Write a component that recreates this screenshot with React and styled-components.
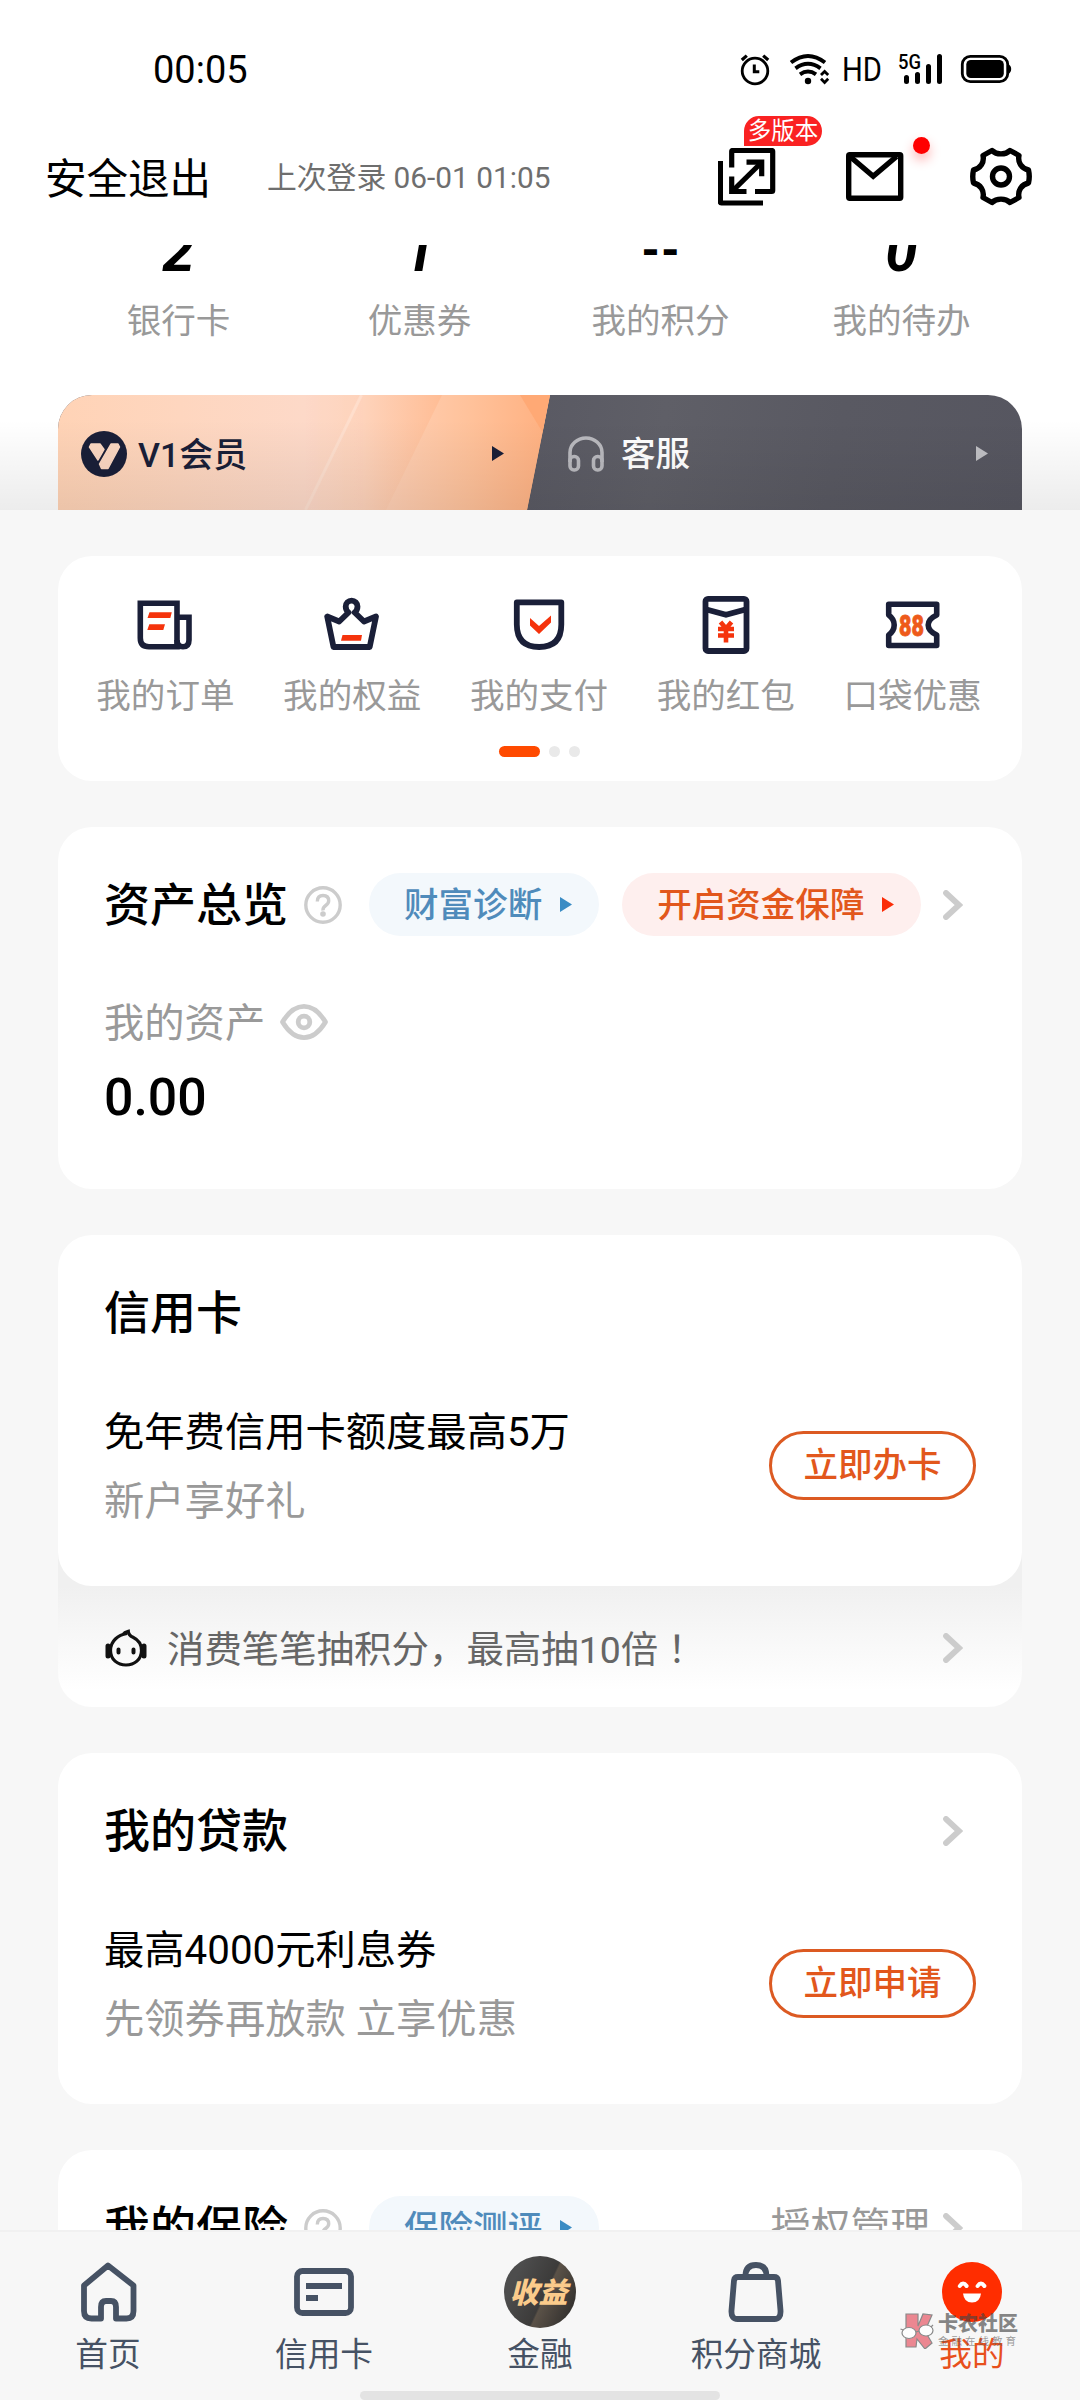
import React from 'react';
import styled, { createGlobalStyle } from 'styled-components';

const QUICK = [
  { label: '我的订单', icon: 'order' },
  { label: '我的权益', icon: 'crown' },
  { label: '我的支付', icon: 'shield' },
  { label: '我的红包', icon: 'packet' },
  { label: '口袋优惠', icon: 'coupon' },
];

const STATS = [
  { value: '2', label: '银行卡' },
  { value: '1', label: '优惠券' },
  { value: '--', label: '我的积分', small: true },
  { value: '0', label: '我的待办' },
];

const StatusIcons = () => (
  <svg width="272" height="38" viewBox="740 50 272 38" fill="none" stroke="#000">
    {/* alarm */}
    <circle cx="755" cy="71" r="12.8" strokeWidth="2.8" />
    <path d="M741.8 60l5-4.4M768.2 60l-5-4.4" strokeWidth="3.2" />
    <path d="M754.3 64.5v7.2h5" strokeWidth="3" />
    {/* wifi */}
    <path d="M791 62.5q17-13 34 0" strokeWidth="4" />
    <path d="M795.5 68.3q12.5-9 25 0" strokeWidth="4" />
    <path d="M800 74.3q8-5.6 16 0" strokeWidth="4" />
    <circle cx="808" cy="81" r="3.2" fill="#000" stroke="none" />
    <path d="M821 75l3.6-3.6 3.6 3.6M821 78.8l3.6 3.6 3.6-3.6" strokeWidth="2.8" />
    <text x="842" y="81" fontSize="34" fontFamily="Roboto, sans-serif" fill="#000" stroke="none" textLength="40" lengthAdjust="spacingAndGlyphs">HD</text>
    <text x="898" y="69" fontSize="20.5" fontFamily="Roboto, sans-serif" fontWeight="500" fill="#000" stroke="none" textLength="23" lengthAdjust="spacingAndGlyphs">5G</text>
    <g strokeWidth="5" strokeLinecap="round">
      <path d="M906.5 77.5v4M917.5 74.5v7M928.5 66.5v15M939.5 56.5v25" />
    </g>
    {/* battery */}
    <rect x="962.3" y="56.3" width="45.4" height="25.4" rx="8" strokeWidth="2.8" />
    <rect x="966.3" y="60" width="37.5" height="18" rx="4.5" fill="#000" stroke="none" />
    <path d="M1008 64q3.2 1.5 3.2 5t-3.2 5z" fill="#000" stroke="none" />
  </svg>
);

const ExpandIcon = () => (
  <svg width="58" height="58" viewBox="718 148 58 58" fill="none" stroke="#000" strokeWidth="5.2">
    <path d="M720.4 161v41q0 1 1 1H763" />
    <path d="M731.7 167.500v-16q0-1 1-1h39q1 0 1 1v39q0 1-1 1H755" />
    <path d="M746.5 162.2h15.2v14" />
    <path d="M731.7 176.500v15h14.8" />
    <path d="M733 190.5l28-27.5" />
  </svg>
);

const MailIcon = () => (
  <svg width="58" height="50" viewBox="846 152 58 50" fill="none" stroke="#000" strokeWidth="5.4">
    <rect x="848.7" y="154.700" width="52" height="43.600" rx="1" />
    <path d="M850 156.5l23.200 19.800 23.300-19.800" />
  </svg>
);

const GearIcon = () => (
  <svg width="62" height="60" viewBox="970.500 147 62 60" fill="none" stroke="#000" strokeWidth="5.400" strokeLinejoin="round">
    <path d="M992.5 150.5C997 155 1006 155 1010.5 150.5L1019.5 155.500C1018 162.5 1022 168.5 1029 170Q1030.5 176.5 1029 183C1022 184.5 1018 190.5 1019.5 197.5L1010.5 202.5C1006 198 997 198 992.5 202.5L983.5 197.5C985 190.5 981 184.5 974 183Q972.5 176.5 974 170C981 168.5 985 162.5 983.5 155.500Z" />
    <circle cx="1001.5" cy="176.5" r="8.5" />
  </svg>
);

const VipLogo = () => (
  <svg width="46" height="46" viewBox="0 0 46 46">
    <circle cx="23" cy="23" r="23" fill="#1a1f38" />
    <path d="M10 13h9l4 5.5-6 10.5-8.500-13z" fill="#fbd7c2" stroke="#fbd7c2" strokeWidth="1.5" strokeLinejoin="round" />
    <path d="M30 13h7l1.500 3-11.500 21.500h-6.500l-2-4.500z" fill="#fbd7c2" stroke="#fbd7c2" strokeWidth="1.5" strokeLinejoin="round" />
  </svg>
);

const Headphones = () => (
  <svg width="36" height="36" viewBox="0 0 36 36" fill="none" stroke="#b9b9be" strokeWidth="3.6">
    <path d="M2 26V16.500a16 14.500 0 0 1 32 0V26" />
    <rect x="2" y="20.500" width="8.500" height="13.500" rx="4" />
    <rect x="25.500" y="20.500" width="8.500" height="13.500" rx="4" />
  </svg>
);

/* light facets behind the member entry */
const Facets = () => (
  <FacetArt viewBox="0 0 492 115" preserveAspectRatio="none">
    <defs>
      <linearGradient id="fa" x1="0" x2="1" y1="0" y2="0">
        <stop offset="0" stopColor="#ffd3b6" />
        <stop offset="0.500" stopColor="#fdd9c8" />
        <stop offset="0.620" stopColor="#fed3bb" />
        <stop offset="0.780" stopColor="#ffbd95" />
        <stop offset="1" stopColor="#ffb27f" />
      </linearGradient>
      <linearGradient id="fb" x1="0" x2="1" y1="0" y2="0">
        <stop offset="0" stopColor="#ffd0b5" />
        <stop offset="0.500" stopColor="#ffc29b" />
        <stop offset="1" stopColor="#ffb080" />
      </linearGradient>
    </defs>
    <rect width="492" height="115" fill="url(#fa)" />
    <path d="M384 0H492V115H328z" fill="url(#fb)" />
    <path d="M462 0H492L485 38z" fill="#ffa975" />
    <path d="M303.5 0l-56 115" stroke="#ffe4d5" strokeWidth="3" opacity="0.6" />
  </FacetArt>
);

const Arrow = ({ color }) => (
  <svg width="12" height="15" viewBox="0 0 12 15">
    <path d="M0 0l12 7.5L0 15z" fill={color} />
  </svg>
);

const Chevron = () => (
  <svg width="20" height="30" viewBox="0 0 20 30" fill="none" stroke="#ccc" strokeWidth="5.800" strokeLinecap="round">
    <path d="M3 3l13 12L3 27" />
  </svg>
);

const HelpIcon = () => (
  <svg width="38" height="38" viewBox="0 0 38 38" fill="none" stroke="#ccc" strokeWidth="3.4">
    <circle cx="19" cy="19" r="17.200" />
    <path d="M13.300 15.500q0-6 5.700-6t5.700 5.300q0 2.700-3 4.700t-2.700 5" />
    <circle cx="19" cy="28" r="2.800" fill="#ccc" stroke="none" />
  </svg>
);

const EyeIcon = () => (
  <svg width="48" height="36" viewBox="0 0 48 36" fill="none" stroke="#ccc" strokeWidth="4.800">
    <path d="M2.500 18Q12 2.400 24 2.400T45.500 18Q36 33.600 24 33.600T2.500 18z" strokeLinejoin="round" />
    <circle cx="24" cy="18" r="5.800" />
  </svg>
);

const BabyIcon = () => (
  <svg width="42" height="38" viewBox="0 0 42 38" fill="none" stroke="#111" strokeWidth="3.2">
    <path d="M22 4.500C13 6 5.500 12 5.500 21.500c0 9 7 14.500 15.500 14.500s15.500-5.500 15.500-14.500c0-7-4-11-8.500-13.200-3-1.500-4.500-2.500-4.700-6-3 .7-4.500 1.800-6 3.800" />
    <path d="M3 17v10M39 17v10" strokeWidth="5" strokeLinecap="round" />
    <path d="M13.500 20.500v3M28.500 20.500v3" strokeWidth="4" strokeLinecap="round" />
  </svg>
);

const NAVY = '#1a1f38';
const RED = '#f5330c';

const QuickIcon = ({ name }) => {
  if (name === 'order') {
    return (
      <svg width="56" height="60" viewBox="138 595 56 60" fill="none" stroke={NAVY} strokeWidth="5.6">
        <path d="M141.300 603.300H178v43.400H150q-8.700 0-8.700-8.700z" />
        <path d="M178 617.300h12V640q0 6.700-6 6.700t-6-6.700" />
        <path d="M150.500 612.300h22.300l-1.500 5.800H148.500zM150.300 624.200h15.700l-1.700 5.800h-16z" fill={RED} stroke="none" />
      </svg>
    );
  }
  if (name === 'crown') {
    return (
      <svg width="56" height="60" viewBox="325 595 56 60" fill="none" stroke={NAVY} strokeWidth="5.800" strokeLinejoin="round">
        <path d="M349.500 612.500q-2.800-2.500-2.800-6a5.900 5.900 0 0 1 11.800 0q0 3.500-2.800 6l9.300 9 12-5-6.300 30.500H334.500l-6.300-30.500 12 5z" />
        <path d="M343.500 635h19.500l-1 5.800h-20z" fill={RED} stroke="none" />
      </svg>
    );
  }
  if (name === 'shield') {
    return (
      <svg width="56" height="60" viewBox="511.500 595 56 60" fill="none" stroke={NAVY} strokeWidth="5.800" strokeLinejoin="round">
        <path d="M517.300 602.400h44.500V624.500q0 22.500-22.200 22.500t-22.300-22.500z" />
        <path d="M530.500 618l9 8 12-10.500v7l-12 11.500-9-8.500z" fill={RED} stroke="none" />
      </svg>
    );
  }
  if (name === 'packet') {
    return (
      <svg width="56" height="60" viewBox="697.500 595 56 60" fill="none" stroke={NAVY} strokeWidth="5.8">
        <rect x="705" y="598.800" width="41" height="52.200" rx="2.500" />
        <path d="M706 609.500l19.500 5.300 19.500-5.300" />
        <path d="M720 622l5.500 6.500 5.500-6.500M717.500 629h16M717.500 635.500h16M725.500 628v14.500" stroke={RED} strokeWidth="4.6" />
      </svg>
    );
  }
  return (
    <svg width="56" height="60" viewBox="885 595 56 60" fill="none" stroke={NAVY} strokeWidth="5.6" strokeLinejoin="round">
      <path d="M888.700 604.300h48V615q-8.500 4-8.500 10t8.500 10v10.500h-48V635q5.500-4 5.500-10t-5.500-10z" />
      <text x="899" y="636" fontSize="30" fontWeight="900" fontFamily="Roboto, sans-serif" fill="#ee5a1a" stroke="#ee5a1a" strokeWidth="0.8" textLength="25" lengthAdjust="spacingAndGlyphs">88</text>
    </svg>
  );
};

const HomeIcon = () => (
  <svg width="60" height="60" viewBox="77.500 2262 60 60" fill="none" stroke="#465264" strokeWidth="5.800" strokeLinejoin="round">
    <path d="M107.500 2265.500L83.500 2285.500V2311q0 7.500 7.500 7.500H100.500V2307q0-6 5-6h5q5 0 5 6v11.500H126q7 0 7-7.500V2285.500z" />
  </svg>
);

const CardIcon = () => (
  <svg width="60" height="60" viewBox="294 2262 60 60" fill="none" stroke="#465264" strokeWidth="5.800">
    <rect x="297" y="2271" width="54" height="42" rx="5.500" />
    <path d="M306 2286h36M306 2298h12" />
  </svg>
);

const BagIcon = () => (
  <svg width="60" height="60" viewBox="726 2262 60 60" fill="none" stroke="#465264" strokeWidth="5.800" strokeLinejoin="round">
    <path d="M738 2277h36q3.500 0 4 3.500l2.500 30q.5 8.500-6 8.500h-37q-6.500 0-6-8.500l2.500-30q.5-3.500 4-3.500z" />
    <path d="M745.500 2276q0-11 10.500-11t10.500 11" />
  </svg>
);

const FaceIcon = () => (
  <svg width="60" height="60" viewBox="0 0 60 60" fill="none" stroke="#fff">
    <circle cx="30" cy="30" r="30" fill="#ff2d00" stroke="none" />
    <path d="M17.800 24q3.300-5 6.800 0M35.600 24q3.300-5 6.800 0" strokeWidth="4" strokeLinecap="round" />
    <path d="M21 31.500h18q-1 9-9 9t-9-9z" fill="#fff" stroke="none" />
  </svg>
);

const MarkLogo = () => (
  <svg width="35" height="36" viewBox="0 0 35 36" stroke="#777" strokeWidth="1.2">
    <path d="M6 1h12v12l5-12 9 1-7 16 7 12-7 6-8-10-1 8H6z" fill="#ea7480" />
    <ellipse cx="9" cy="20" rx="7" ry="5.500" fill="#fff" />
    <ellipse cx="26" cy="17.500" rx="7" ry="5.500" fill="#fff" />
    <path d="M.5 16l3 1M16 19l3-1M33 12l-2 2" />
  </svg>
);

const App = () => {
  return (
    <Screen>
      <GlobalStyle />
      <StatusBar>
        <Clock>00:05</Clock>
        <StatusIcons />
      </StatusBar>
      <TopBar>
        <Logout>安全退出</Logout>
        <LastLogin>上次登录 06-01 01:05</LastLogin>
        <Actions>
          <Action>
            <ExpandIcon />
            <Badge>多版本</Badge>
          </Action>
          <Action>
            <MailIcon />
            <Dot />
          </Action>
          <Action>
            <GearIcon />
          </Action>
        </Actions>
      </TopBar>

      <Content>
        <Hero>
          <Stats>
            {STATS.map((s) => (
              <Stat key={s.label}>
                <StatValue $small={s.small}>{s.value}</StatValue>
                <StatLabel>{s.label}</StatLabel>
              </Stat>
            ))}
          </Stats>
          <MemberBar>
            <Member>
              <Facets />
              <VipLogo />
              <MemberText>V1会员</MemberText>
              <Arrow color={NAVY} />
            </Member>
            <Service>
              <Headphones />
              <ServiceText>客服</ServiceText>
              <Arrow color="#c0c0c4" />
            </Service>
          </MemberBar>
        </Hero>

        <Cards>
          <QuickCard>
            <QuickRow>
              {QUICK.map((q) => (
                <Quick key={q.label}>
                  <QuickIcon name={q.icon} />
                  <QuickLabel>{q.label}</QuickLabel>
                </Quick>
              ))}
            </QuickRow>
            <Pager>
              <Page $active />
              <Page />
              <Page />
            </Pager>
          </QuickCard>

          <Card $height={362}>
            <TitleRow>
              <Title>资产总览</Title>
              <HelpIcon />
              <Pill>
                <PillText>财富诊断</PillText>
                <Arrow color="#3a8cc4" />
              </Pill>
              <Pill $warm>
                <PillText>开启资金保障</PillText>
                <Arrow color="#fb2c07" />
              </Pill>
              <More>
                <Chevron />
              </More>
            </TitleRow>
            <AssetLabel>
              <AssetName>我的资产</AssetName>
              <EyeIcon />
            </AssetLabel>
            <AssetValue>0.00</AssetValue>
          </Card>

          <Stack>
            <Card $height={351}>
              <TitleRow>
                <Title>信用卡</Title>
              </TitleRow>
              <Offer>
                <div>
                  <OfferMain>免年费信用卡额度最高5万</OfferMain>
                  <OfferSub>新户享好礼</OfferSub>
                </div>
                <ApplyBtn>立即办卡</ApplyBtn>
              </Offer>
            </Card>
            <Strip>
              <BabyIcon />
              <StripText>
                消费笔笔抽积分，最高抽10倍<Mark>！</Mark>
              </StripText>
              <More>
                <Chevron />
              </More>
            </Strip>
          </Stack>

          <Card $height={351}>
            <TitleRow>
              <Title>我的贷款</Title>
              <More>
                <Chevron />
              </More>
            </TitleRow>
            <Offer>
              <div>
                <OfferMain>最高4000元利息券</OfferMain>
                <OfferSub>先领券再放款 立享优惠</OfferSub>
              </div>
              <ApplyBtn>立即申请</ApplyBtn>
            </Offer>
          </Card>

          <Card $height={300}>
            <TitleRow>
              <Title>我的保险</Title>
              <HelpIcon />
              <Pill>
                <PillText>保险测评</PillText>
                <Arrow color="#3a8cc4" />
              </Pill>
              <More>
                授权管理
                <Chevron />
              </More>
            </TitleRow>
          </Card>
        </Cards>
      </Content>

      <TabBar>
        <Tab>
          <HomeIcon />
          <TabLabel>首页</TabLabel>
        </Tab>
        <Tab>
          <CardIcon />
          <TabLabel>信用卡</TabLabel>
        </Tab>
        <Tab>
          <Coin>收益</Coin>
          <TabLabel>金融</TabLabel>
        </Tab>
        <Tab>
          <BagIcon />
          <TabLabel>积分商城</TabLabel>
        </Tab>
        <Tab>
          <FaceIcon />
          <TabLabel $active>我的</TabLabel>
        </Tab>
        <HomeIndicator />
        <Watermark>
          <MarkLogo />
          <div>
            <WaterName>卡农社区</WaterName>
            <WaterSub>金融在线教育</WaterSub>
          </div>
        </Watermark>
      </TabBar>
    </Screen>
  );
};

const GlobalStyle = createGlobalStyle`
  body {
    margin: 0;
  }
  * {
    box-sizing: border-box;
  }
  svg {
    display: block;
    flex-shrink: 0;
  }
`;

const Screen = styled.div`
  display: flex;
  flex-direction: column;
  width: 1080px;
  height: 2400px;
  overflow: hidden;
  background: #f7f7f7;
  color: #000;
  font-family: Roboto, 'Noto Sans CJK SC', sans-serif;
  white-space: nowrap;
`;

const StatusBar = styled.div`
  display: flex;
  justify-content: space-between;
  align-items: center;
  height: 111px;
  padding: 27px 68px 0 153px;
  background: #fff;
`;

const Clock = styled.div`
  padding-top: 1px;
  font-size: 38px;
  line-height: 44px;
`;

const TopBar = styled.div`
  display: flex;
  align-items: center;
  height: 134px;
  padding: 0 48px 0 45px;
  background: #fff;
`;

const Logout = styled.div`
  width: 222px;
  padding-top: 3px;
  font-size: 41.5px;
  line-height: 60px;
`;

const LastLogin = styled.div`
  font-size: 29.8px;
  line-height: 44px;
  color: #6e6e6e;
`;

const Actions = styled.div`
  display: flex;
  align-items: center;
  gap: 67px;
  margin-top: -2px;
  margin-left: auto;
`;

const Action = styled.div`
  position: relative;
  & + & {
    margin-left: 3px;
  }
  & + & + & {
    margin-left: -1px;
  }
`;

const Badge = styled.div`
  position: absolute;
  left: 24px;
  top: -34px;
  width: 82px;
  height: 34px;
  border: 2px solid #fff;
  border-radius: 17px 17px 17px 0;
  background: #fa2222;
  color: #fff;
  font-size: 23.5px;
  line-height: 31px;
  text-align: center;
`;

const Dot = styled.div`
  position: absolute;
  left: 67px;
  top: -15px;
  width: 17px;
  height: 17px;
  border-radius: 50%;
  background: #ff0000;
  box-shadow: 0 6px 12px rgba(255, 0, 0, 0.3);
`;

const Content = styled.div`
  flex: 1;
  min-height: 0;
  overflow: hidden;
`;

const Hero = styled.div`
  position: relative;
  height: 265px;
  padding: 0 58px;
  background: #fff;
  &::after {
    content: '';
    position: absolute;
    left: 0;
    right: 0;
    bottom: 0;
    height: 90px;
    background: linear-gradient(rgba(0, 0, 0, 0), rgba(0, 0, 0, 0.075));
  }
`;

const Stats = styled.div`
  display: grid;
  grid-template-columns: repeat(4, 1fr);
  height: 150px;
`;

const Stat = styled.div`
  text-align: center;
`;

const StatValue = styled.div`
  height: 60px;
  margin-top: -23px;
  font-size: ${(p) => (p.$small ? '44px' : '58px')};
  font-weight: ${(p) => (p.$small ? 900 : 700)};
  font-style: ${(p) => (p.$small ? 'normal' : 'italic')};
  line-height: 58px;
`;

const StatLabel = styled.div`
  margin-top: 13px;
  font-size: 34.56px;
  line-height: 52px;
  color: #999;
`;

const MemberBar = styled.div`
  display: flex;
  height: 115px;
  border-radius: 34px 34px 0 0;
  overflow: hidden;
  background: linear-gradient(100deg, #585862 45%, #5f5f67 62%, #595962 80%, #565660);
`;

const Member = styled.div`
  position: relative;
  display: flex;
  align-items: center;
  width: 492px;
  padding: 2px 46px 0 23px;
  clip-path: polygon(0 0, 100% 0, 469px 100%, 0 100%);
  & > svg:last-child {
    position: relative;
  }
  & > svg:nth-child(2) {
    position: relative;
  }
`;

const FacetArt = styled.svg`
  position: absolute;
  left: 0;
  top: 0;
  width: 100%;
  height: 100%;
`;

const MemberText = styled.div`
  position: relative;
  flex: 1;
  margin-left: 11px;
  padding-top: 2px;
  font-size: 34px;
  font-weight: 500;
  line-height: 50px;
  color: #1a1f38;
`;

const Service = styled.div`
  display: flex;
  flex: 1;
  align-items: center;
  padding: 2px 34px 0 18px;
`;

const ServiceText = styled.div`
  flex: 1;
  margin-left: 17px;
  padding-top: 1px;
  font-size: 34.56px;
  font-weight: 500;
  line-height: 50px;
  color: #fff;
`;

const Cards = styled.div`
  display: flex;
  flex-direction: column;
  gap: 46px;
  padding: 46px 58px 0;
`;

const Card = styled.div`
  position: relative;
  z-index: 1;
  flex-shrink: 0;
  height: ${(p) => p.$height}px;
  padding: 46px 46px 0;
  border-radius: 34px;
  background: #fff;
`;

const QuickCard = styled.div`
  height: 225px;
  padding: 39px 16px 0 14px;
  border-radius: 34px;
  background: #fff;
`;

const QuickRow = styled.div`
  display: grid;
  grid-template-columns: repeat(5, 1fr);
`;

const Quick = styled.div`
  display: flex;
  flex-direction: column;
  align-items: center;
`;

const QuickLabel = styled.div`
  margin-top: 15px;
  font-size: 34.56px;
  line-height: 52px;
  color: #999;
`;

const Pager = styled.div`
  display: flex;
  justify-content: center;
  gap: 9px;
  margin-top: 24px;
`;

const Page = styled.div`
  width: ${(p) => (p.$active ? '41px' : '11px')};
  height: 11px;
  border-radius: 6px;
  background: ${(p) => (p.$active ? '#ff4a00' : '#e9e9e9')};
`;

const TitleRow = styled.div`
  display: flex;
  align-items: center;
  height: 63px;
`;

const Title = styled.div`
  margin-right: 16px;
  padding-top: 2px;
  font-size: 46px;
  font-weight: 500;
  line-height: 61px;
`;

const Pill = styled.div`
  display: flex;
  align-items: center;
  gap: 18px;
  height: 63px;
  margin-left: ${(p) => (p.$warm ? '23px' : '27px')};
  padding: 0 27px 0 35px;
  border-radius: 32px;
  background: ${(p) => (p.$warm ? '#feefee' : '#f3f8fc')};
  color: ${(p) => (p.$warm ? '#e2571c' : '#4f8bbb')};
  font-size: 34.56px;
  font-weight: 500;
`;

const PillText = styled.span`
  line-height: 62px;
`;

const More = styled.div`
  display: flex;
  align-items: center;
  gap: 13px;
  margin-left: auto;
  margin-right: 13px;
  font-size: 39.8px;
  line-height: 60px;
  color: #999;
`;

const AssetLabel = styled.div`
  display: flex;
  align-items: center;
  gap: 15px;
  margin-top: 54px;
  font-size: 40.3px;
  color: #999;
`;

const AssetName = styled.span`
  padding-top: 4px;
  line-height: 60px;
`;

const AssetValue = styled.div`
  margin-top: 12px;
  font-size: 51.84px;
  font-weight: 500;
  line-height: 64px;
`;

const Stack = styled.div`
  flex-shrink: 0;
`;

const Offer = styled.div`
  display: flex;
  justify-content: space-between;
  align-items: center;
  margin-top: 54px;
`;

const OfferMain = styled.div`
  font-size: 40.3px;
  line-height: 69px;
`;

const OfferSub = styled.div`
  font-size: 40.3px;
  line-height: 69px;
  color: #999;
`;

const ApplyBtn = styled.button`
  width: 207px;
  height: 69px;
  margin-top: -4px;
  padding: 0;
  border: 3px solid #dc5a22;
  border-radius: 35px;
  background: none;
  color: #e2571c;
  font-family: inherit;
  font-size: 34.56px;
  font-weight: 500;
  line-height: 63px;
  cursor: pointer;
`;

const Strip = styled.div`
  display: flex;
  align-items: center;
  height: 161px;
  margin-top: -40px;
  padding: 43px 46px 0 47px;
  border-radius: 0 0 34px 34px;
  background: linear-gradient(#f0f0f0 25%, #fff 90%);
`;

const StripText = styled.div`
  margin-left: 20px;
  font-size: 37.44px;
  line-height: 56px;
  color: #666;
`;

const Mark = styled.span`
  font-family: 'Noto Sans CJK JP', sans-serif;
`;

const TabBar = styled.div`
  position: relative;
  display: grid;
  grid-template-columns: repeat(5, 1fr);
  height: 170px;
  border-top: 2px solid #f1f1f1;
  background: #f7f7f7;
`;

const Tab = styled.div`
  display: flex;
  flex-direction: column;
  align-items: center;
  justify-content: flex-end;
  padding-bottom: 20px;
`;

const TabLabel = styled.div`
  margin-top: 8px;
  font-size: 32.7px;
  line-height: 50px;
  color: ${(p) => (p.$active ? '#e8501c' : '#465264')};
`;

const Coin = styled.div`
  width: 72px;
  height: 72px;
  margin-bottom: -6px;
  border-radius: 50%;
  background: linear-gradient(115deg, #4d4d4d 20%, #3c3b3a 55%, #5b5248 57%, #32302e 90%);
  color: #fbcb8b;
  font-size: 29px;
  font-weight: 900;
  font-style: italic;
  line-height: 74px;
  text-indent: -3px;
  text-align: center;
`;

const HomeIndicator = styled.div`
  position: absolute;
  left: 360px;
  bottom: 0;
  width: 360px;
  height: 9px;
  border-radius: 5px;
  background: #e3e3e3;
`;

const Watermark = styled.div`
  position: absolute;
  left: 900px;
  top: 81px;
  display: flex;
  gap: 3px;
  opacity: 0.85;
`;

const WaterName = styled.div`
  font-size: 20px;
  font-weight: 900;
  line-height: 23px;
  color: rgba(70, 70, 70, 0.75);
`;

const WaterSub = styled.div`
  font-size: 10.5px;
  letter-spacing: 3px;
  line-height: 12px;
  color: rgba(90, 90, 90, 0.7);
`;

export default App;
